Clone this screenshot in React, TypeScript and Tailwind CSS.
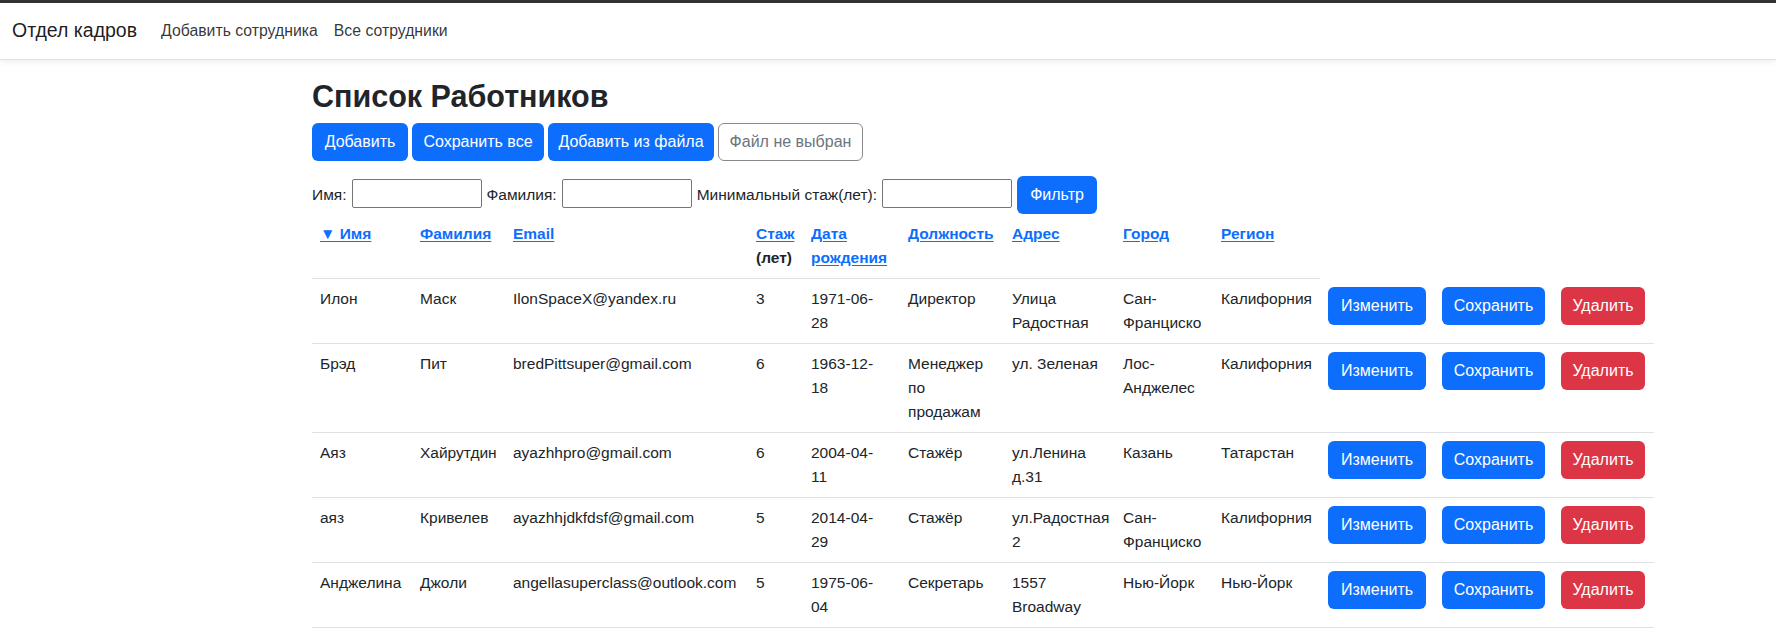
import React from "react";

type Employee = {
  id: number;
  firstName: string;
  lastName: string;
  email: string;
  experience: number;
  birthDate: string;
  position: string;
  address: string;
  city: string;
  region: string;
};

const employees: Employee[] = [
  {
    id: 1,
    firstName: "Илон",
    lastName: "Маск",
    email: "IlonSpaceX@yandex.ru",
    experience: 3,
    birthDate: "1971-06-28",
    position: "Директор",
    address: "Улица Радостная",
    city: "Сан-Франциско",
    region: "Калифорния",
  },
  {
    id: 2,
    firstName: "Брэд",
    lastName: "Пит",
    email: "bredPittsuper@gmail.com",
    experience: 6,
    birthDate: "1963-12-18",
    position: "Менеджер по продажам",
    address: "ул. Зеленая",
    city: "Лос-Анджелес",
    region: "Калифорния",
  },
  {
    id: 3,
    firstName: "Аяз",
    lastName: "Хайрутдин",
    email: "ayazhhpro@gmail.com",
    experience: 6,
    birthDate: "2004-04-11",
    position: "Стажёр",
    address: "ул.Ленина д.31",
    city: "Казань",
    region: "Татарстан",
  },
  {
    id: 4,
    firstName: "аяз",
    lastName: "Кривелев",
    email: "ayazhhjdkfdsf@gmail.com",
    experience: 5,
    birthDate: "2014-04-29",
    position: "Стажёр",
    address: "ул.Радостная 2",
    city: "Сан-Франциско",
    region: "Калифорния",
  },
  {
    id: 5,
    firstName: "Анджелина",
    lastName: "Джоли",
    email: "angellasuperclass@outlook.com",
    experience: 5,
    birthDate: "1975-06-04",
    position: "Секретарь",
    address: "1557 Broadway",
    city: "Нью-Йорк",
    region: "Нью-Йорк",
  },
];

const colWidths = [100, 93, 243, 55, 97, 104, 111, 98, 107, 114, 119, 101];

const SortLink = ({ children }: { children: React.ReactNode }) => (
  <a href="#" className="text-[#0d6efd] underline underline-offset-2">
    {children}
  </a>
);

const App = () => {
  return (
    <div className="min-h-screen bg-white font-['Liberation_Sans',Arial,sans-serif] text-[#212529]">
      <div className="h-[3px] bg-[#333]" />
      <nav className="flex h-[57px] items-center border-b border-[#dee2e6] px-3 shadow-[0_2px_6px_rgba(0,0,0,0.07)]">
        <a href="#" className="mr-4 text-[19.5px] text-black/90">
          Отдел кадров
        </a>
        <a href="#" className="px-2 text-[15.8px] text-black/80">
          Добавить сотрудника
        </a>
        <a href="#" className="px-2 text-[15.8px] text-black/80">
          Все сотрудники
        </a>
      </nav>

      <main className="mx-auto w-[1176px] px-3">
        <h2 className="mt-[17px] mb-2 text-[30.5px] leading-[38px] font-bold">
          Список Работников
        </h2>

        <div className="flex gap-1 text-[16px]">
          <button className="h-[38px] w-[96px] rounded-md bg-[#0d6efd] text-white">
            Добавить
          </button>
          <button className="h-[38px] w-[132px] rounded-md bg-[#0d6efd] text-white">
            Сохранить все
          </button>
          <button className="h-[38px] w-[166px] rounded-md bg-[#0d6efd] text-white">
            Добавить из файла
          </button>
          <button className="h-[38px] w-[145px] rounded-md border border-[#8a8a8a] bg-white text-[#6c757d]">
            Файл не выбран
          </button>
        </div>

        <div className="mt-[15px] flex items-center gap-[5px] text-[15.5px]">
          <span>Имя:</span>
          <input className="mb-[4px] h-[29px] w-[130px] rounded-[2px] border border-[#767676] px-1" />
          <span>Фамилия:</span>
          <input className="mb-[4px] h-[29px] w-[130px] rounded-[2px] border border-[#767676] px-1" />
          <span>Минимальный стаж(лет):</span>
          <input className="mb-[4px] h-[29px] w-[130px] rounded-[2px] border border-[#767676] px-1" />
          <button className="h-[38px] w-[80px] rounded-md bg-[#0d6efd] text-[16px] text-white">
            Фильтр
          </button>
        </div>

        <table className="w-[1342px] table-fixed border-collapse text-left text-[15.5px] leading-6">
          <colgroup>
            {colWidths.map((w, i) => (
              <col key={i} style={{ width: w }} />
            ))}
          </colgroup>
          <thead>
            <tr className="align-top font-bold">
              <th className="border-b border-[#dee2e6] p-2">
                <SortLink>▼ Имя</SortLink>
              </th>
              <th className="border-b border-[#dee2e6] p-2">
                <SortLink>Фамилия</SortLink>
              </th>
              <th className="border-b border-[#dee2e6] p-2">
                <SortLink>Email</SortLink>
              </th>
              <th className="border-b border-[#dee2e6] p-2">
                <SortLink>Стаж</SortLink> (лет)
              </th>
              <th className="border-b border-[#dee2e6] p-2">
                <SortLink>Дата рождения</SortLink>
              </th>
              <th className="border-b border-[#dee2e6] p-2">
                <SortLink>Должность</SortLink>
              </th>
              <th className="border-b border-[#dee2e6] p-2">
                <SortLink>Адрес</SortLink>
              </th>
              <th className="border-b border-[#dee2e6] p-2">
                <SortLink>Город</SortLink>
              </th>
              <th className="border-b border-[#dee2e6] p-2">
                <SortLink>Регион</SortLink>
              </th>
            </tr>
          </thead>
          <tbody>
            {employees.map((e) => (
              <tr key={e.id} className="align-top">
                <td className="border-b border-[#dee2e6] p-2">{e.firstName}</td>
                <td className="border-b border-[#dee2e6] p-2">{e.lastName}</td>
                <td className="border-b border-[#dee2e6] p-2">{e.email}</td>
                <td className="border-b border-[#dee2e6] p-2">{e.experience}</td>
                <td className="border-b border-[#dee2e6] p-2">
                  {e.birthDate.slice(0, 8)}
                  <br />
                  {e.birthDate.slice(8)}
                </td>
                <td className="border-b border-[#dee2e6] p-2">{e.position}</td>
                <td className="border-b border-[#dee2e6] p-2">{e.address}</td>
                <td className="border-b border-[#dee2e6] p-2">{e.city}</td>
                <td className="border-b border-[#dee2e6] p-2">{e.region}</td>
                <td className="border-b border-[#dee2e6] p-2">
                  <button className="h-[38px] w-[98px] rounded-md bg-[#0d6efd] text-[16px] text-white">
                    Изменить
                  </button>
                </td>
                <td className="border-b border-[#dee2e6] p-2">
                  <button className="h-[38px] w-[103px] rounded-md bg-[#0d6efd] text-[16px] text-white">
                    Сохранить
                  </button>
                </td>
                <td className="border-b border-[#dee2e6] p-2">
                  <button className="h-[38px] w-[84px] rounded-md bg-[#dc3545] text-[16px] text-white">
                    Удалить
                  </button>
                </td>
              </tr>
            ))}
          </tbody>
        </table>
      </main>
    </div>
  );
};

export default App;
